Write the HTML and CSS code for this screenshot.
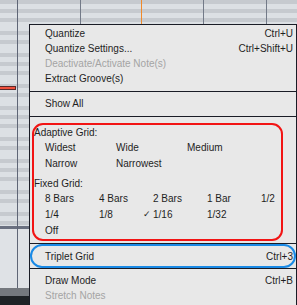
FILE: index.html
```html
<!DOCTYPE html>
<html>
<head>
  <link rel="stylesheet" href="styles.css">
</head>
<body>
  <div class="roll">
    <div class="note"></div>
    <div class="marker"></div>
    <div class="footer"></div>
  </div>

  <div class="menu">
    <div class="section first">
      <div class="item"><span>Quantize</span><span class="key">Ctrl+U</span></div>
      <div class="item"><span>Quantize Settings...</span><span class="key">Ctrl+Shift+U</span></div>
      <div class="item disabled"><span>Deactivate/Activate Note(s)</span></div>
      <div class="item"><span>Extract Groove(s)</span></div>
    </div>
    <div class="section show">
      <div class="item"><span>Show All</span></div>
    </div>
    <div class="section grids">
      <div class="grid-box">
        <div class="head">Adaptive Grid:</div>
        <div class="opts adaptive">
          <span>Widest</span><span>Wide</span><span>Medium</span>
        </div>
        <div class="opts adaptive tall">
          <span>Narrow</span><span>Narrowest</span>
        </div>
        <div class="head fixed">Fixed Grid:</div>
        <div class="opts">
          <span>8 Bars</span><span>4 Bars</span><span>2 Bars</span><span>1 Bar</span><span>1/2</span>
        </div>
        <div class="opts tall">
          <span>1/4</span><span>1/8</span><span class="checked">1/16</span><span>1/32</span>
        </div>
        <div class="opts">
          <span>Off</span>
        </div>
      </div>
    </div>
    <div class="section triplet">
      <div class="item blue-box"><span>Triplet Grid</span><span class="key">Ctrl+3</span></div>
    </div>
    <div class="section last">
      <div class="item"><span>Draw Mode</span><span class="key">Ctrl+B</span></div>
      <div class="item disabled"><span>Stretch Notes</span></div>
    </div>
  </div>
</body>
</html>
```

FILE: styles.css
```css
body {
  margin: 0;
  width: 297px;
  height: 305px;
  overflow: hidden;
  position: relative;
  font-family: "Liberation Sans", Arial, sans-serif;
  font-size: 10px;
  color: #1e1e1e;
}

/* piano roll behind the menu */
.roll {
  position: relative;
  width: 297px;
  height: 305px;
  background:
    linear-gradient(to right, transparent 17px, #5f6676 17px, #5f6676 18px, transparent 18px),
    linear-gradient(to right, transparent 80px, #737a88 80px, #737a88 81px, transparent 81px),
    linear-gradient(to right, transparent 203px, #737a88 203px, #737a88 204px, transparent 204px),
    linear-gradient(to right, transparent 266px, #737a88 266px, #737a88 267px, transparent 267px),
    linear-gradient(to bottom, transparent 226px, #6a7080 226px, #6a7080 229px, #dfe2e6 229px),
    repeating-linear-gradient(to bottom,
      #c6cacf 0, #c6cacf 4px,
      #dce0e4 4px, #dce0e4 9px,
      #c6cacf 9px, #c6cacf 13px,
      #dce0e4 13px, #dce0e4 18px,
      #c6cacf 18px, #c6cacf 22px,
      #dce0e4 22px, #dce0e4 31px,
      #c6cacf 31px, #c6cacf 35px,
      #dce0e4 35px, #dce0e4 40px,
      #c6cacf 40px, #c6cacf 44px,
      #dce0e4 44px, #dce0e4 53px);
}

.note {
  position: absolute;
  left: 0;
  top: 86px;
  width: 16px;
  height: 4px;
  background: #f0503c;
  border: 1px solid #5a2a2a;
  border-left: none;
  box-sizing: border-box;
}

.marker {
  position: absolute;
  left: 141px;
  top: 0;
  width: 1px;
  height: 24px;
  background: #f08a2a;
}

.footer {
  position: absolute;
  left: 0;
  top: 288px;
  width: 297px;
  height: 17px;
  background: linear-gradient(to bottom, #74787e 0, #74787e 8px, #1e2226 8px);
}

/* context menu */
.menu {
  position: absolute;
  left: 29px;
  top: 24px;
  width: 268px;
  height: 290px;
  box-sizing: border-box;
  background: #e8e8e8;
  border: 1px solid #1a1c26;
}

.section + .section {
  border-top: 1px solid #1a1c26;
}

.first {
  padding: 1px 0 5px;
}

.show {
  padding: 4px 0 5px;
}

.grids {
  padding: 6px 0 2px 2px;
}

.last {
  padding-top: 4px;
}

.item {
  display: flex;
  justify-content: space-between;
  height: 15px;
  line-height: 15px;
  padding: 0 3px 0 15px;
  white-space: nowrap;
}

.disabled {
  color: #a4a4a4;
}

.grid-box {
  width: 251px;
  box-sizing: border-box;
  border: 2px solid #f21414;
  border-radius: 11px;
  padding: 0 0 1px 0;
}

.head {
  height: 15px;
  line-height: 15px;
}

.head.fixed {
  height: 14px;
  line-height: 14px;
  margin-top: 5px;
}

.opts {
  display: grid;
  grid-template-columns: repeat(5, 54px);
  height: 15px;
  line-height: 15px;
  padding-left: 1px;
}

.opts.adaptive {
  grid-template-columns: repeat(3, 71px);
}

.opts.tall {
  height: 17px;
  line-height: 17px;
}

.opts span {
  padding-left: 10px;
  white-space: nowrap;
}

.opts .checked {
  position: relative;
}

.opts .checked::before {
  content: "\2713";
  position: absolute;
  left: 0;
  font-family: "DejaVu Sans", sans-serif;
  font-size: 9px;
}

.triplet .blue-box {
  height: 24px;
  line-height: 22px;
  box-sizing: border-box;
  border: 2px solid #1a8ae6;
  border-radius: 12px;
  padding: 0 1px 0 13px;
  margin-right: 0;
}
```
